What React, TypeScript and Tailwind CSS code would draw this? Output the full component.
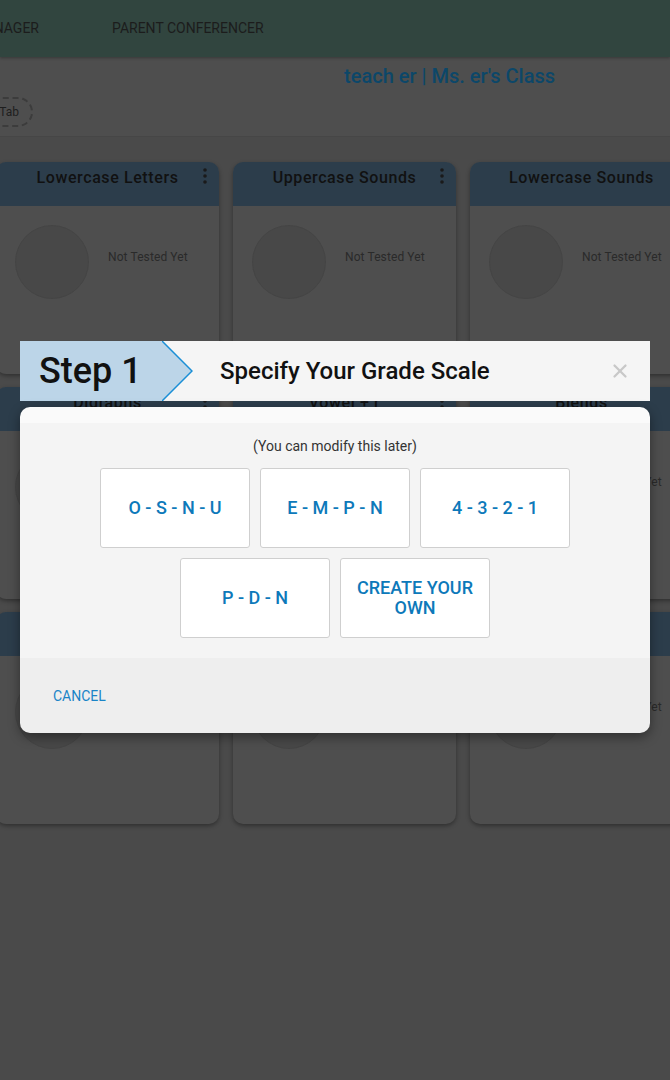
import { X } from 'lucide-react';

const rows = [
  ['Lowercase Letters', 'Uppercase Sounds', 'Lowercase Sounds'],
  ['Digraphs', 'Vowel + r', 'Blends'],
  ['Word Families', 'Sight Words', 'Short Vowels'],
];

const scales = ['O - S - N - U', 'E - M - P - N', '4 - 3 - 2 - 1', 'P - D - N', 'CREATE YOUR OWN'];

function Kebab() {
  return (
    <svg width="4" height="16" viewBox="0 0 4 16" className="mt-[5px]">
      <circle cx="2" cy="2" r="1.8" fill="#1a1a1a" />
      <circle cx="2" cy="8" r="1.8" fill="#1a1a1a" />
      <circle cx="2" cy="14" r="1.8" fill="#1a1a1a" />
    </svg>
  );
}

function Card({ title }: { title: string }) {
  return (
    <div className="w-[223px] h-[212px] shrink-0 rounded-[10px] bg-[#4e4e4e] shadow-[0_2px_4px_rgba(0,0,0,0.35)] overflow-hidden">
      <div className="h-[44px] bg-[#2c3d4b] flex items-start justify-center relative pt-[6px]">
        <span className="text-[16px] font-medium tracking-[0.6px] leading-[20px] text-[#111]">{title}</span>
        <div className="absolute right-[12px] top-[1px]">
          <Kebab />
        </div>
      </div>
      <div className="flex items-start pl-[19px] pt-[19px]">
        <div className="w-[74px] h-[74px] rounded-full bg-[#484848] border border-[#454545]" />
        <span className="ml-[19px] mt-[23px] text-[12px] text-[#2a2a2a] tracking-[0.1px]">Not Tested Yet</span>
      </div>
    </div>
  );
}

export default function App() {
  return (
    <div className="w-[670px] h-[1080px] relative overflow-hidden bg-[#4a4a4a] font-['Roboto',sans-serif]">
      {/* nav */}
      <div className="h-[57px] bg-[#31453f] flex items-center shadow-[0_1px_3px_rgba(0,0,0,0.3)] relative z-10">
        <div className="w-[160px] -ml-[121px] text-right text-[14px] text-[#1c1c1c] whitespace-nowrap">CLASSROOM MANAGER</div>
        <div className="ml-[73px] text-[14px] text-[#1c1c1c] whitespace-nowrap">PARENT CONFERENCER</div>
      </div>

      {/* class header */}
      <div className="h-[80px] bg-[#4e4e4e] border-b border-[#464646] flex flex-col">
        <div className="flex justify-end pr-[115px] pt-[7px]">
          <span className="text-[20px] font-medium leading-[24px] text-[#0c4769]">teach er | Ms. er's Class</span>
        </div>
        <div className="mt-[9px] -ml-[22px] w-[55px] h-[30px] rounded-full border-2 border-dashed border-[#3c3c3c] flex items-center justify-end pr-[12px]">
          <span className="text-[12px] text-[#1e1e1e]">Tab</span>
        </div>
      </div>

      {/* cards */}
      <div className="flex flex-col gap-[13px] pt-[25px] -ml-[4px]">
        {rows.map((row, i) => (
          <div key={i} className="flex gap-[14px]">
            {row.map(t => (
              <Card key={t} title={t} />
            ))}
          </div>
        ))}
      </div>

      {/* modal */}
      <div className="absolute left-[20px] top-[341px] w-[630px] flex flex-col gap-[6px] z-20">
        <div className="h-[60px] bg-[#f5f5f5] flex items-center">
          <div className="h-full w-[142px] bg-[#bcd5e8] flex items-center pl-[19px]">
            <span className="text-[36px] font-medium text-[#111] leading-none">Step 1</span>
          </div>
          <svg width="31" height="60" viewBox="0 0 31 60" className="shrink-0">
            <polygon points="0,0 30,30 0,60" fill="#bcd5e8" />
            <polyline points="0,0 30,30 0,60" fill="none" stroke="#1a8fd6" strokeWidth="1.5" />
          </svg>
          <span className="ml-[27px] text-[24px] font-medium text-[#111]">Specify Your Grade Scale</span>
          <X className="ml-auto mr-[19px] text-[#c8c8c8]" size={22} strokeWidth={2.5} />
        </div>

        <div className="rounded-[10px] overflow-hidden shadow-[0_4px_12px_rgba(0,0,0,0.4)]">
          <div className="h-[16px] bg-[#fafafa]" />
          <div className="bg-[#f4f4f4] pt-[14px] pb-[20px] flex flex-col items-center">
            <span className="text-[14px] leading-[18px] text-[#333]">(You can modify this later)</span>
            <div className="mt-[13px] flex flex-wrap justify-center gap-[10px] w-[470px]">
              {scales.map(s => (
                <button
                  key={s}
                  className="w-[150px] h-[80px] bg-white border border-[#cfcfcf] rounded-[3px] flex items-center justify-center px-[12px] text-[18px] font-medium leading-[20px] text-[#0d79ba]"
                >
                  {s}
                </button>
              ))}
            </div>
          </div>
          <div className="h-[75px] bg-[#eeeeee] flex items-center pl-[33px] pt-[2px]">
            <span className="text-[14px] text-[#1a84c7]">CANCEL</span>
          </div>
        </div>
      </div>
    </div>
  );
}
